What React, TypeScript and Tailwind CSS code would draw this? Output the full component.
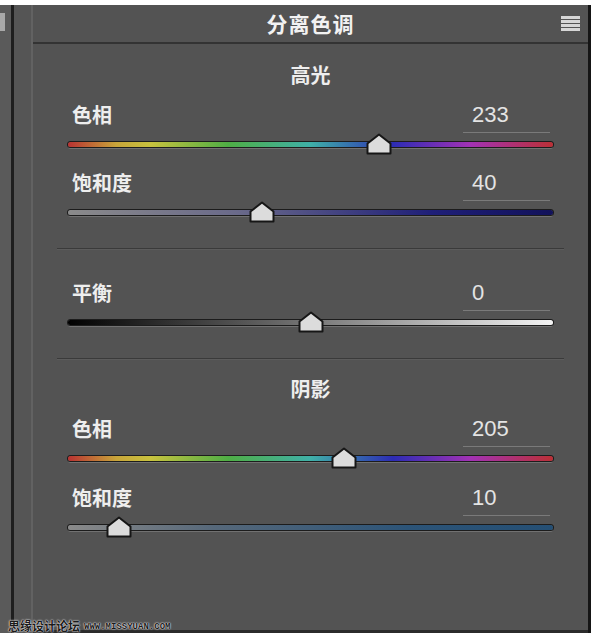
import type { ReactNode } from "react";

const CJK = { fontFamily: '"Noto Sans CJK SC", "Noto Sans", sans-serif' };
const NUM = { fontFamily: '"Liberation Sans", Arial, sans-serif' };

const HUE =
  "linear-gradient(to right, #b83232 0%, #c8a53a 10%, #c8c23e 17%, #4fae45 33%, #3fb0a8 50%, #2c2cb4 67%, #a232b4 83%, #bb3036 100%)";

type SliderProps = {
  label: string;
  value: number;
  pct: number;
  track: string;
};

function Thumb() {
  return (
    <svg width="26" height="22" viewBox="0 0 26 22">
      <polygon
        points="13,1.5 24.5,10.5 24.5,20.5 1.5,20.5 1.5,10.5"
        fill="#dcdcdc"
        stroke="#161616"
        strokeWidth="2"
        strokeLinejoin="round"
      />
    </svg>
  );
}

function Slider({ label, value, pct, track }: SliderProps) {
  return (
    <div>
      <div className="flex items-start justify-between pl-[39px] pr-[38px]">
        <span className="text-[20px] leading-[26px] font-bold text-[#eeeeee]" style={CJK}>
          {label}
        </span>
        <div
          className="w-[87px] h-[31px] border-b border-[#7a7a7a] pl-[9px] text-[22px] leading-[26px] text-[#e4e4e4]"
          style={NUM}
        >
          {value}
        </div>
      </div>
      <div className="px-[35px]">
        <div className="relative h-[22px] flex items-center">
          <div
            className="w-full h-[5px] rounded-full ring-1 ring-[#1c1c1c] shadow-[0_2px_0_rgba(150,150,150,0.45)]"
            style={{ background: track }}
          />
          <div className="absolute top-0 -ml-[13px]" style={{ left: `${pct}%` }}>
            <Thumb />
          </div>
        </div>
      </div>
    </div>
  );
}

function Heading({ children }: { children: ReactNode }) {
  return (
    <div className="text-center text-[20px] leading-[26px] font-bold text-[#eeeeee]" style={CJK}>
      {children}
    </div>
  );
}

function Divider() {
  return <div className="mx-[24px] h-[2px] bg-[#3a3a3a] border-b border-[#5c5c5c]" />;
}

export default function App() {
  return (
    <div className="relative w-[600px] h-[642px] bg-white overflow-hidden">
      <div className="flex w-[591px] h-[628px] mt-[5px]">
        {/* neighbouring dock column */}
        <div className="w-[11px] bg-[#5a5a5a] pt-[8px]">
          <div className="w-[5px] h-[18px] bg-[#a9a9a9]" />
        </div>
        <div className="w-[3px] bg-[#1e1e1e]" />
        <div className="w-[19px] bg-[#555555] border-r-2 border-[#626262]" />

        {/* split toning panel */}
        <div className="flex-1 flex flex-col bg-[#535353] border-b-[3px] border-[#2b2b2b]">
          <div className="grid grid-cols-[1fr_auto_1fr] items-center h-[39px] border-b-2 border-[#333333]">
            <div />
            <div className="text-[21px] font-bold text-[#f2f2f2] tracking-[1px]" style={CJK}>
              分离色调
            </div>
            <div className="justify-self-end pr-[8px]">
              <div className="flex flex-col gap-[1.5px] w-[19px]">
                <div className="h-[2.5px] bg-[#d6d6d6]" />
                <div className="h-[2.5px] bg-[#d6d6d6]" />
                <div className="h-[2.5px] bg-[#d6d6d6]" />
                <div className="h-[2.5px] bg-[#d6d6d6]" />
              </div>
            </div>
          </div>

          <div className="pt-[18px]">
            <Heading>高光</Heading>
            <div className="mt-[14px]">
              <Slider label="色相" value={233} pct={64.2} track={HUE} />
            </div>
            <div className="mt-[15px]">
              <Slider
                label="饱和度"
                value={40}
                pct={40}
                track="linear-gradient(to right, #8a8a8a 0%, #6a6a8a 35%, #1f1f78 75%, #12125a 100%)"
              />
            </div>
          </div>

          <div className="mt-[25px]">
            <Divider />
          </div>

          <div className="mt-[30px]">
            <Slider
              label="平衡"
              value={0}
              pct={50}
              track="linear-gradient(to right, #000000 0%, #6a6a6a 45%, #f4f4f4 100%)"
            />
          </div>

          <div className="mt-[25px]">
            <Divider />
          </div>

          <div className="pt-[16px]">
            <Heading>阴影</Heading>
            <div className="mt-[14px]">
              <Slider label="色相" value={205} pct={57} track={HUE} />
            </div>
            <div className="mt-[16px]">
              <Slider
                label="饱和度"
                value={10}
                pct={10.5}
                track="linear-gradient(to right, #8a8a8a 0%, #56687a 30%, #2c5478 70%, #254f74 100%)"
              />
            </div>
          </div>
        </div>

        <div className="w-[3px] bg-[#151515]" />
      </div>

      {/* site watermark */}
      <div className="absolute left-[8px] top-[619px] flex items-end gap-[4px] text-[#1a1a1a] [text-shadow:0_0_2px_#fff,0_0_1px_#fff]">
        <span className="text-[12px] leading-[14px] font-bold" style={CJK}>
          思缘设计论坛
        </span>
        <span
          className="text-[9px] leading-[12px] font-bold"
          style={{ fontFamily: '"Liberation Mono", "DejaVu Sans Mono", monospace' }}
        >
          WWW.MISSYUAN.COM
        </span>
      </div>
    </div>
  );
}
